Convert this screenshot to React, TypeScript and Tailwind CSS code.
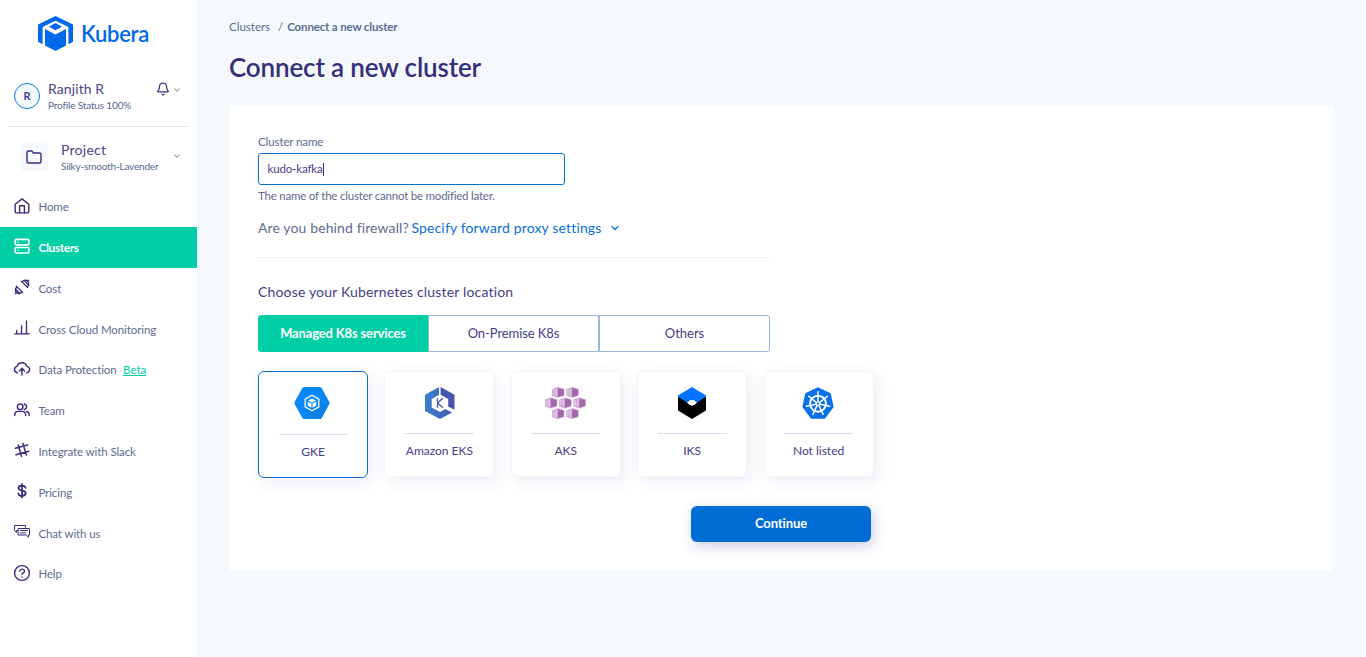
import type { ReactNode } from 'react';
import { Bell, ChevronDown } from 'lucide-react';

const stroke = {
  fill: 'none',
  stroke: 'currentColor',
  strokeWidth: 1.4,
  strokeLinecap: 'round' as const,
  strokeLinejoin: 'round' as const,
};

function Icon({ children }: { children: ReactNode }) {
  return (
    <svg viewBox="0 0 16 16" className="size-4 shrink-0 overflow-visible" {...stroke}>
      {children}
    </svg>
  );
}

const HomeIcon = () => (
  <Icon>
    <path d="M1.200 6.200 8 .9l6.800 5.300v7.300a1.400 1.400 0 0 1-1.400 1.400H2.600a1.400 1.400 0 0 1-1.400-1.400Z" />
    <path d="M5.600 14.800V7.700h4.800v7.100" />
  </Icon>
);
const ClustersIcon = () => (
  <Icon>
    <rect x="1.100" y="1.300" width="13.800" height="5.500" rx="1.500" strokeWidth="1.700" />
    <rect x="1.100" y="9.500" width="13.800" height="5.500" rx="1.500" strokeWidth="1.700" />
    <path d="M4 4h.1M4 12.200h.1" />
  </Icon>
);
const CostIcon = () => (
  <Icon>
    <g strokeWidth="1.300">
      <path d="M7.300 2.100 13.700 8.500M8.500 3.300C8.500 2 9.600 1.200 11 1.200c2.200 0 3.800 1.600 3.700 3.700 0 1.400-.8 2.500-2.100 2.500M10.300 1.600l4.200 4.300M13.400 2.400 14.700 1.100" />
      <path d="M2.300 7.100 8.700 13.500M3.500 8.300C2.200 8.300 1.400 9.400 1.300 10.800c0 2.200 1.600 3.800 3.700 3.700 1.400 0 2.500-.8 2.500-2.100M1.600 10.200l4.200 4.200M2.500 13.200 1.100 14.600" />
    </g>
  </Icon>
);
const ChartIcon = () => (
  <Icon>
    <path strokeWidth="1.300" d="M.7 13.800h14.600M2.700 13.500v-3M7.500 13.500V5.600M12.500 13.500V.8" />
  </Icon>
);
const CloudIcon = () => (
  <Icon>
    <path d="M3.600 11.900C1.700 11.500.4 10 .5 8.300c.1-1.600 1.300-2.700 2.700-2.900C3.600 3.200 5.600 1.800 8 1.800c2.300 0 4.200 1.500 4.700 3.600 1.700.3 2.900 1.600 2.900 3.200 0 1.700-1.200 3.100-3.100 3.300" />
    <path d="M8 14V7.400M5.400 9.900 8 7.300l2.600 2.600" />
  </Icon>
);
const TeamIcon = () => (
  <Icon>
    <circle cx="6.200" cy="4.800" r="2.800" />
    <path d="M.8 13.500v-.9c0-2 1.500-3.200 3.400-3.200h4c1.900 0 3.400 1.200 3.400 3.200v.9M10.300 2a2.800 2.800 0 0 1 0 5.500M12.500 9.500c1.700.3 2.700 1.500 2.700 3v1" />
  </Icon>
);
const SlackIcon = () => (
  <Icon>
    <path strokeWidth="1.500" d="M1.300 6.300 13.600 3M2 12.800 14.800 9.300M4.200 3 7.500 14.400M9 1.500l3.300 11.600" />
  </Icon>
);
const DollarIcon = () => (
  <Icon>
    <path strokeWidth="1.700" d="M8 .9v13.600M11.500 4.900C11.200 3.300 9.900 2.600 8 2.600c-2 0-3.500.9-3.500 2.500 0 3.600 7.200 1.600 7.200 5.200 0 1.700-1.500 2.600-3.600 2.600-2.200 0-3.600-.9-3.800-2.600" />
  </Icon>
);
const ChatIcon = () => (
  <Icon>
    <g strokeWidth="1">
      <path d="M3.600 6.500H2.500V8.500L.5 6.500V1.500h11v1.800" />
      <path d="M4.500 4.500h11v6.500h-1v2.200L12.300 11H4.500ZM6.200 6.500h7.300M6.200 8.900h5.600" />
    </g>
  </Icon>
);
const HelpIcon = () => (
  <Icon>
    <circle cx="8" cy="8" r="7.400" />
    <path d="M5.700 6.100c.2-1.300 1.100-2 2.400-2s2.400.8 2.400 2.100C10.500 7.800 8 7.900 8 9.500M8 11.900v.1" />
  </Icon>
);

const NAV = [
  { label: 'Home', icon: HomeIcon },
  { label: 'Clusters', icon: ClustersIcon, active: true },
  { label: 'Cost', icon: CostIcon },
  { label: 'Cross Cloud Monitoring', icon: ChartIcon },
  { label: 'Data Protection', icon: CloudIcon, beta: true },
  { label: 'Team', icon: TeamIcon },
  { label: 'Integrate with Slack', icon: SlackIcon },
  { label: 'Pricing', icon: DollarIcon },
  { label: 'Chat with us', icon: ChatIcon },
  { label: 'Help', icon: HelpIcon },
];

function Sidebar() {
  return (
    <aside className="flex w-[197px] shrink-0 flex-col bg-white">
      <div className="flex h-[70px] items-center pl-[38px] text-[#0069ea]">
        <svg viewBox="0 0 35 35" className="mb-[3px] h-[35px] w-[35px]" fill="currentColor">
          <path d="M17.500 0 35 8.500v17.300l-4.600 2.400V11.100L17.500 4.700 4.600 11.100v17.100L0 25.800V8.500Z" />
          <path d="M17.500 6.900 24.100 10.800 17.500 14.200 10.900 10.800Z" />
          <path d="M7 13.100 17.500 18.400 28 13.100v16.500L17.500 35 7 29.600Z" />
        </svg>
        <span className="mb-[3px] ml-2 text-[22px] leading-7 font-semibold tracking-[-0.3px]">Kubera</span>
      </div>
      <div className="mx-2 flex h-[57px] border-b border-[#e5e8ef] pt-[10px] pl-[6px]">
        <div className="mt-[3px] flex size-[26px] items-center justify-center rounded-full border border-[#0b78df] bg-[#f3f8fd] text-[11px] font-bold text-[#443e86]">
          R
        </div>
        <div className="ml-2 w-[108px]">
          <div className="text-sm leading-[18px] tracking-[0.1px] text-[#49438b]">Ranjith R</div>
          <div className="text-[10px] leading-[14px] tracking-[-0.16px] text-[#566890]">Profile Status 100%</div>
        </div>
        <Bell className="mt-[2px] size-[14px] text-[#342e7b]" strokeWidth={2.200} />
        <ChevronDown className="mt-[5px] ml-[2px] size-[10px] text-[#8c8e9c]" strokeWidth={2.500} />
      </div>
      <div className="flex h-[59.300px] pt-[14px] pl-[21px]">
        <div className="mt-[2px] flex h-7 w-[27px] items-center justify-center rounded bg-[#f4f9fe] text-[#342e7b]">
          <svg viewBox="0 0 16 14" className="mr-px h-[14px] w-4" {...stroke}>
            <path d="M1 11.500v-9Q1 1 2.500 1h3.300l1.600 2H13.500Q15 3 15 4.500v7Q15 13 13.500 13h-11Q1 13 1 11.500Z" />
          </svg>
        </div>
        <div className="ml-[13px] w-[111px]">
          <div className="text-sm leading-[18px] tracking-[0.25px] text-[#49438b]">Project</div>
          <div className="text-[10px] leading-[14px] tracking-[-0.18px] text-[#566890]">Silky-smooth-Lavender</div>
        </div>
        <ChevronDown className="mt-[10px] size-[10px] text-[#8c8e9c]" strokeWidth={2.500} />
      </div>
      <nav>
        {NAV.map(({ label, icon: NavIcon, active, beta }) => (
          <a
            key={label}
            className={
              active
                ? 'flex h-[40.800px] items-center bg-[#00cfa5] pl-[14px] text-[#fff]'
                : 'flex h-[40.800px] items-center pl-[14px] text-[#342e7b]'
            }
          >
            <span className="mb-[2px]"><NavIcon /></span>
            <span
              className={
                active
                  ? 'mt-px ml-[8.400px] text-xs leading-4 font-bold tracking-[-0.4px] text-white'
                  : 'mt-px ml-[8.400px] text-[11.500px] leading-4 tracking-[-0.1px] text-[#5b6c92]'
              }
            >
              {label}
            </span>
            {beta && <span className="mt-px ml-[6.500px] text-[11.500px] leading-4 text-[#00cfa5] underline">Beta</span>}
          </a>
        ))}
      </nav>
    </aside>
  );
}

const GkeLogo = () => (
  <svg viewBox="0 0 36 32" className="mr-[2px] h-8 w-9">
    <path fill="#0788f6" d="M10.400 0h15.200q1.400 0 2.200 1.200l7.300 13.300q.8 1.500 0 3l-7.300 13.300Q27 32 25.600 32H10.400Q9 32 8.200 30.800L.9 17.500q-.8-1.500 0-3L8.200 1.200Q9 0 10.400 0Z" />
    <path fill="#0880e8" d="m24.500 11.500 8.600 8.400-5.300 10.900Q27 32 25.600 32H20l-8-8Z" />
    <path fill="#0788f6" stroke="#fff" strokeWidth="1.300" d="m18 8.300 6.800 3.800v7.800L18 23.700l-6.800-3.800v-7.800Z" />
    <path fill="#fff" d="m18 11.500 4 2-4 2-4-2ZM13.700 14.500l3.800 2v4.200l-3.800-2.100ZM22.300 14.500l-3.800 2v4.200l3.800-2.100Z" />
  </svg>
);

const EksLogo = () => (
  <svg viewBox="0 0 30 32" className="ml-px h-8 w-[30px]">
    <defs>
      <linearGradient id="eks" x1="0" y1="0" x2="1" y2="0.300">
        <stop offset="0" stopColor="#3a83ce" />
        <stop offset="1" stopColor="#4062b8" />
      </linearGradient>
    </defs>
    <path fill="url(#eks)" d="M14 0v7.800l-7.300 4.200v8.400L15 25l5.200-3 6.900 3.500L15 32 0 24V7.800Z" />
    <path fill="#4656ac" d="M15.600 0 29.500 7.800v14.900l-6.300-3.300V12l-7.600-4.200Z" />
    <path fill="none" stroke="#4059a8" strokeWidth="1.300" d="M12.500 11.200v9.600M17.800 11.200l-5.200 4.900 5.400 4.700" />
  </svg>
);

const AKS_CELLS = [
  [7, 0], [21.300, 0],
  [0, 10.600], [14.200, 10.600], [28.500, 10.600],
  [7, 21.200], [21.300, 21.200],
];

const AksLogo = () => (
  <svg viewBox="0 0 41 32" className="h-8 w-[41px]">
    {AKS_CELLS.map(([x, y]) => (
      <g key={`${x}-${y}`} transform={`translate(${x} ${y})`}>
        <path fill="#c9a2d0" d="M0 2.200 5.900 0l6.400 1.900v6.800L5.900 10.800 0 8.800Z" />
        <path fill="#e0c8e5" d="m.8 3 4.300-1.600v8L.8 8Z" />
        <path fill="#c69fcd" d="M2.500 2h.8v7h-.8Z" />
        <path fill="#a467ac" d="m5.900 1 5.900 1.500v5.700L5.900 9.900Z" />
      </g>
    ))}
  </svg>
);

const IksLogo = () => (
  <svg viewBox="0 0 28 32" className="h-8 w-7">
    <path fill="#000" d="M0 9.500 9.500 15 14 19l4.500-4L28 9.500v14L14 32 0 23.500Z" />
    <path fill="#0070ff" d="m14 0 14 8.500v1.300L18.700 15.500 14 13.500l-4.700 2L0 9.800V8.500Z" />
    <path fill="#fff" d="M9 15.800C11 13.500 12.500 13 14 13s3 .5 5 2.800Q14 21 9 15.800Z" />
  </svg>
);

const KubernetesLogo = () => (
  <svg viewBox="0 0 32 32" className="mr-[2px] h-8 w-8">
    <path fill="#0870e8" stroke="#0870e8" strokeWidth="2" strokeLinejoin="round" d="m16 1.300 11.800 5.600L30.600 19.600 22.500 30.700H9.500L1.400 19.600 4.200 6.900Z" />
    <g fill="none" stroke="#fff">
      <circle cx="16" cy="16.700" r="8" strokeWidth="1.900" />
      {[0, 1, 2, 3, 4, 5, 6].map((i) => (
        <path key={i} strokeWidth="1.500" strokeLinecap="round" d="M16 14.500V4.800" transform={`rotate(${(i * 360) / 7} 16 16.700)`} />
      ))}
      <circle cx="16" cy="16.700" r="1.700" strokeWidth="1.200" />
    </g>
  </svg>
);

const PROVIDERS = [
  { name: 'GKE', logo: GkeLogo, selected: true },
  { name: 'Amazon EKS', logo: EksLogo },
  { name: 'AKS', logo: AksLogo },
  { name: 'IKS', logo: IksLogo },
  { name: 'Not listed', logo: KubernetesLogo },
];

export default function App() {
  return (
    <div className="flex h-[657px] overflow-hidden bg-[#f4f9fe] font-['Lato',sans-serif]">
      <Sidebar />
      <main className="flex-1 pr-8 pl-8">
        <div className="mt-[18px] flex text-[11.500px] leading-[18px] text-[#5b6c92]">
          <span>Clusters</span>
          <span className="mr-[4px] ml-[8px]">/</span>
          <span className="font-bold tracking-[-0.16px]">Connect a new cluster</span>
        </div>
        <h1 className="mt-[13px] text-[26px] leading-9 font-semibold tracking-[-0.15px] text-[#342e7b]">Connect a new cluster</h1>
        <section className="mt-5 h-[466px] rounded bg-white pt-7 pl-[29px]">
          <div className="text-[11.500px] leading-[18px] tracking-[-0.1px] text-[#5b6c92]">Cluster name</div>
          <div className="mt-[2px] flex h-8 w-[307px] items-center rounded-[3px] border border-[#0870d0] pl-[8.500px] text-[11.500px] tracking-[-0.15px] text-[#443e86]">
            kudo-kafka
            <span className="h-[13px] w-px bg-[#342e7b]" />
          </div>
          <div className="mt-[2px] text-[11.500px] leading-[18px] tracking-[-0.22px] text-[#5b6c92]">The name of the cluster cannot be modified later.</div>
          <div className="mt-[13px] flex items-center text-sm leading-5 tracking-[0.15px] text-[#5b6c92]">
            <span className="tracking-[0.12px]">Are you behind firewall?</span>
            <span className="ml-[2.500px] text-[#0870d6]">Specify forward proxy settings</span>
            <ChevronDown className="ml-[7px] size-3 text-[#0870d6]" strokeWidth={2.500} />
          </div>
          <hr className="mt-[19px] w-[512px] border-[#eeeef2]" />
          <div className="mt-6 text-sm leading-5 tracking-[0.17px] text-[#443e86]">Choose your Kubernetes cluster location</div>
          <div className="mt-[13px] grid h-[37px] w-[512px] grid-cols-[170px_171px_171px] text-center text-[13px] leading-[34px] text-[#443e86]">
            <div className="rounded-l-[3px] border border-[#00cfa5] bg-[#00cfa5] font-bold tracking-[-0.15px] text-white">Managed K8s services</div>
            <div className="border border-[#98b9df] tracking-[-0.08px]">On-Premise K8s</div>
            <div className="rounded-r-[3px] border border-[#98b9df]">Others</div>
          </div>
          <div className="mt-[19px] flex gap-[16.400px]">
            {PROVIDERS.map(({ name, logo: Logo, selected }) => (
              <div
                key={name}
                className={
                  selected
                    ? 'flex h-[107px] w-[110px] flex-col items-center rounded-md border border-[#0870d0] bg-white pt-[15px] shadow-[4px_5px_16px_rgba(50,45,160,0.09)]'
                    : 'flex h-[106px] w-[110px] flex-col items-center rounded-md border border-[#f4f4f5] bg-white pt-[15px] shadow-[4px_5px_16px_rgba(50,45,160,0.09)]'
                }
              >
                <Logo />
                <div className={selected ? 'mt-[15px] h-px w-[68px] bg-[#d4e0f0]' : 'mt-[14px] h-px w-[69px] bg-[#d4e0f0]'} />
                <div className="mt-[8px] text-xs leading-[18px] text-[#443e86]">{name}</div>
              </div>
            ))}
          </div>
          <button className="mt-7 ml-[433px] h-9 w-[180px] rounded-md bg-[#006cd6] pb-px text-[13px] font-bold tracking-[-0.1px] text-white shadow-[2px_4px_14px_rgba(50,45,160,0.25)]">
            Continue
          </button>
        </section>
      </main>
    </div>
  );
}
